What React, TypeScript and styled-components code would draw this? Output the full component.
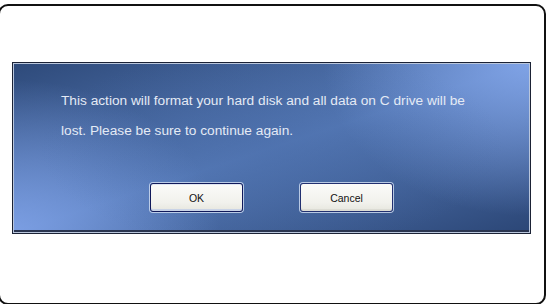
import React from "react";
import styled, { createGlobalStyle } from "styled-components";

const Global = createGlobalStyle`
  html, body { margin: 0; padding: 0; background: #ffffff; overflow: hidden; }
  body { width: 548px; height: 304px; }
`;

const Frame = styled.div`
  box-sizing: border-box;
  margin: 4px 0 0 -2px;
  width: 548px;
  height: 301px;
  border: 2px solid #111111;
  border-radius: 10px;
  background: #ffffff;
  padding: 56px 0 0 12px;
`;

const Panel = styled.div`
  box-sizing: border-box;
  width: 519px;
  height: 172px;
  border: 1px solid #1b2235;
  box-shadow: inset 0 0 0 1px #b9c6dc, inset 0 -2px 0 1px #2a3550;
  background:
    radial-gradient(ellipse 45% 60% at 50% 50%, rgba(70, 105, 165, 0.4), rgba(70, 105, 165, 0) 100%),
    radial-gradient(ellipse 40% 90% at 100% 0%, rgba(135, 170, 238, 0.85), rgba(135, 170, 238, 0) 100%),
    radial-gradient(ellipse 40% 90% at 0% 100%, rgba(130, 165, 235, 0.85), rgba(130, 165, 235, 0) 100%),
    linear-gradient(to bottom right, #2e4a7a 0%, #5579b6 50%, #2b4676 100%);
  padding: 23px 0 0 48px;
  display: flex;
  flex-direction: column;
`;

const Message = styled.p`
  margin: 0;
  font-family: "Liberation Sans", Arial, sans-serif;
  font-size: 13.7px;
  line-height: 30px;
  color: #e4eaf5;
  width: 412px;
`;

const ButtonRow = styled.div`
  display: flex;
  justify-content: center;
  gap: 57px;
  margin: 37px 0 0 -48px;
`;

const Button = styled.button<{ $focused?: boolean }>`
  box-sizing: border-box;
  width: 93px;
  height: 29px;
  border: 1px solid ${(p) => (p.$focused ? "#10195a" : "#223070")};
  border-radius: 3px;
  box-shadow: 0 0 0 1px rgba(205, 218, 240, 0.85)
    ${(p) => (p.$focused ? ", inset 0 -2px 0 #c9d3e6, inset 0 1px 0 #dfe6f2" : ", inset 0 -2px 0 #dcdcd4")};
  background: linear-gradient(#fbfbf9, #f1f1ec 70%, #e6e6de);
  font-family: "Liberation Sans", Arial, sans-serif;
  font-size: 10.5px;
  color: #111111;
  padding: 0;
`;

export default function App() {
  return (
    <>
      <Global />
      <Frame>
        <Panel>
          <Message>
            This action will format your hard disk and all data on C drive will be lost. Please be sure to continue again.
          </Message>
          <ButtonRow>
            <Button $focused>OK</Button>
            <Button>Cancel</Button>
          </ButtonRow>
        </Panel>
      </Frame>
    </>
  );
}
